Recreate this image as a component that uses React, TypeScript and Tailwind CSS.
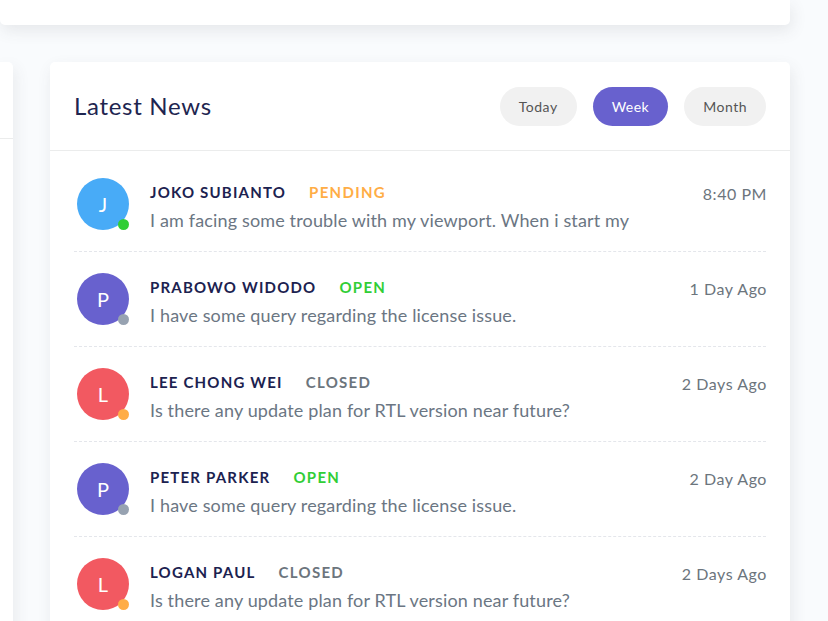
import React from "react";

type Item = {
  name: string;
  status: "PENDING" | "OPEN" | "CLOSED";
  msg: string;
  time: string;
  letter: string;
  avatar: string;
  dot: string;
};

const items: Item[] = [
  { name: "JOKO SUBIANTO", status: "PENDING", msg: "I am facing some trouble with my viewport. When i start my", time: "8:40 PM", letter: "J", avatar: "bg-[#48abf7]", dot: "bg-[#31ce36]" },
  { name: "PRABOWO WIDODO", status: "OPEN", msg: "I have some query regarding the license issue.", time: "1 Day Ago", letter: "P", avatar: "bg-[#6861ce]", dot: "bg-[#97a2b1]" },
  { name: "LEE CHONG WEI", status: "CLOSED", msg: "Is there any update plan for RTL version near future?", time: "2 Days Ago", letter: "L", avatar: "bg-[#f25961]", dot: "bg-[#ffad46]" },
  { name: "PETER PARKER", status: "OPEN", msg: "I have some query regarding the license issue.", time: "2 Day Ago", letter: "P", avatar: "bg-[#6861ce]", dot: "bg-[#97a2b1]" },
  { name: "LOGAN PAUL", status: "CLOSED", msg: "Is there any update plan for RTL version near future?", time: "2 Days Ago", letter: "L", avatar: "bg-[#f25961]", dot: "bg-[#ffad46]" },
];

function statusClass(s: Item["status"]) {
  if (s === "PENDING") return "text-[#ffad46]";
  if (s === "OPEN") return "text-[#31ce36]";
  return "text-[#6c757d]";
}

export default function App() {
  return (
    <div className="w-[828px] h-[621px] overflow-hidden bg-[#f9fbfd] font-['Lato',sans-serif]">
      <div className="w-[790px] h-[25px] bg-white rounded-b-[5px] shadow-[2px_6px_15px_0px_rgba(69,65,78,0.1)]" />
      <div className="flex gap-[37px] mt-[37px]">
        <div className="w-[13px] h-[600px] bg-white rounded-tr-[5px] shadow-[2px_6px_15px_0px_rgba(69,65,78,0.1)]">
          <div className="h-[77px] border-b border-[#ebecec]" />
        </div>
        <div className="w-[740px] h-[600px] bg-white rounded-[5px] shadow-[2px_6px_15px_0px_rgba(69,65,78,0.1)]">
          <div className="h-[89px] px-6 flex items-center justify-between border-b border-[#ebecec]">
            <div className="text-[24px] tracking-[0.7px] text-[#1e2550] leading-none">Latest News</div>
            <div className="flex gap-4 text-[14px] tracking-[0.5px]">
              <button className="h-[39px] px-[19px] rounded-full bg-[#f1f1f1] text-[#555]">Today</button>
              <button className="h-[39px] px-[19px] rounded-full bg-[#6861ce] text-white">Week</button>
              <button className="h-[39px] px-[19px] rounded-full bg-[#f1f1f1] text-[#555]">Month</button>
            </div>
          </div>
          <div className="px-6 pt-[6px]">
            {items.map((it, i) => (
              <div key={i} className="flex items-start py-[21px] border-b border-dashed border-[#e4e6eb]">
                <div className={`relative ml-[3px] w-[52px] h-[52px] rounded-full ${it.avatar} flex items-center justify-center text-white text-[20px] shrink-0`}>
                  {it.letter}
                  <span className={`absolute right-0 bottom-0 w-[11px] h-[11px] rounded-full ${it.dot}`} />
                </div>
                <div className="ml-[21px] flex-1 mt-[3px]">
                  <div className="flex items-center gap-[23px] text-[15px] leading-[22px] font-bold">
                    <span className="text-[#1c2250] tracking-[1.2px]">{it.name}</span>
                    <span className={`tracking-[1.3px] ${statusClass(it.status)}`}>{it.status}</span>
                  </div>
                  <div className="mt-[7px] text-[18px] tracking-[0.15px] leading-[20px] text-[#6b7683]">{it.msg}</div>
                </div>
                <div className="mt-[5px] -mr-[1px] text-[16px] tracking-[0.55px] leading-[22px] text-[#6c757d]">{it.time}</div>
              </div>
            ))}
          </div>
        </div>
      </div>
    </div>
  );
}
